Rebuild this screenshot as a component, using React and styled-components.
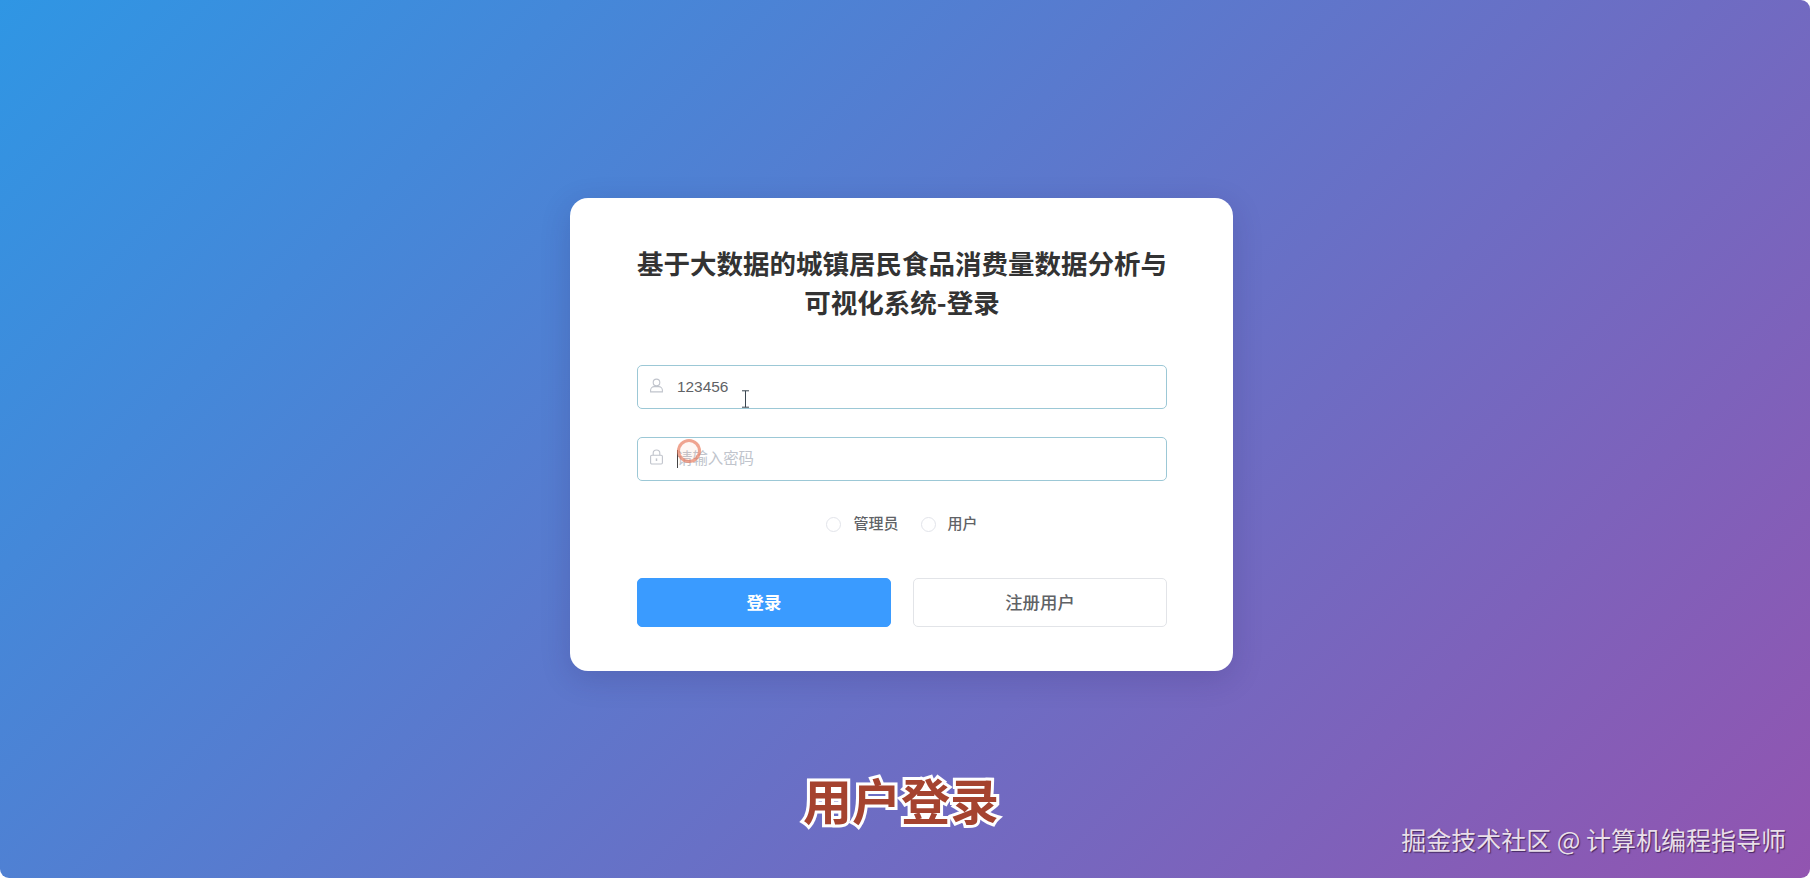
import React from "react";
import styled, { createGlobalStyle } from "styled-components";

const GlobalStyle = createGlobalStyle`
  html, body, #root {
    margin: 0;
    height: 100%;
    background: #fff;
  }
  body {
    font-family: "Liberation Sans", "Noto Sans CJK SC", sans-serif;
    overflow: hidden;
  }
`;

const UserIcon = () => (
  <svg width="15" height="15" viewBox="0 0 15 15" fill="none" stroke="#c0c4cc" strokeWidth="1.1">
    <circle cx="7.5" cy="4.4" r="3.3" />
    <path d="M1.6 13.9v-1.6c0-2.4 1.9-3.7 3.6-3.7h4.6c1.7 0 3.6 1.3 3.6 3.7v1.6z" />
  </svg>
);

const LockIcon = () => (
  <svg width="15" height="16" viewBox="0 0 15 16" fill="none" stroke="#c0c4cc" strokeWidth="1.1">
    <rect x="1.6" y="6.2" width="11.8" height="8.8" rx="1.2" />
    <path d="M4.2 6.2V4.1C4.2 2.3 5.7 1 7.5 1s3.3 1.3 3.3 3.1v2.1" />
    <path d="M7.5 9.4v2.6" strokeWidth="1.5" />
  </svg>
);

const IBeam = () => (
  <svg width="9" height="18" viewBox="0 0 9 18" fill="none" stroke="#3b4650" strokeWidth="1">
    <path d="M1 .8h7M1 17.2h7M4.5 .8v16.4" />
  </svg>
);

const App = () => {
  return (
    <Page>
      <GlobalStyle />
      <Card>
        <Title>基于大数据的城镇居民食品消费量数据分析与可视化系统-登录</Title>
        <Field>
          <FieldIcon $top={13}>
            <UserIcon />
          </FieldIcon>
          <TextInput type="text" value="123456" readOnly />
          <Pointer>
            <IBeam />
          </Pointer>
        </Field>
        <Field $gap>
          <FieldIcon $top={12}>
            <LockIcon />
          </FieldIcon>
          <TextInput type="password" placeholder="请输入密码" readOnly />
          <Caret />
          <ClickRing />
        </Field>
        <RadioGroup>
          <RadioItem>
            <RadioDot />
            管理员
          </RadioItem>
          <RadioItem>
            <RadioDot />
            用户
          </RadioItem>
        </RadioGroup>
        <Buttons>
          <Button $primary>登录</Button>
          <Button>注册用户</Button>
        </Buttons>
      </Card>
      <Caption>用户登录</Caption>
      <Watermark>掘金技术社区 @ 计算机编程指导师</Watermark>
    </Page>
  );
};

export default App;

const Page = styled.div`
  position: relative;
  box-sizing: border-box;
  height: 878px;
  display: flex;
  align-items: center;
  justify-content: center;
  padding: 0 7px 9px 0;
  background: linear-gradient(135deg, #2f96e4, #9254b0);
  border-radius: 0 9px 9px 9px;
  overflow: hidden;
`;

const Card = styled.div`
  box-sizing: border-box;
  width: 663px;
  height: 473px;
  padding: 45px 66px 44px 67px;
  background: #fff;
  border-radius: 18px;
  box-shadow: 0 8px 30px rgba(40, 30, 90, 0.18);
`;

const Title = styled.h1`
  margin: 0 -4px 44px;
  font-family: "Noto Sans CJK SC", sans-serif;
  font-size: 26.5px;
  line-height: 39px;
  font-weight: 700;
  color: #333;
  text-align: center;
`;

const Field = styled.div`
  position: relative;
  height: 44px;
  margin-top: ${({ $gap }) => ($gap ? "28px" : "0")};
`;

const FieldIcon = styled.span`
  position: absolute;
  left: 12px;
  top: ${({ $top }) => $top}px;
  display: flex;
`;

const TextInput = styled.input`
  box-sizing: border-box;
  width: 100%;
  height: 100%;
  padding: 0 15px 0 39px;
  border: 1px solid #9cc8d6;
  border-radius: 5px;
  outline: none;
  background: #fff;
  font-family: "Liberation Sans", "Noto Sans CJK SC", sans-serif;
  font-size: 15.4px;
  color: #606266;
  &::placeholder {
    color: #c0c4cc;
    opacity: 1;
  }
`;

const Pointer = styled.span`
  position: absolute;
  left: 104px;
  top: 25px;
  display: flex;
`;

const Caret = styled.span`
  position: absolute;
  left: 40px;
  top: 13px;
  width: 1px;
  height: 18px;
  background: #444;
`;

const ClickRing = styled.span`
  position: absolute;
  left: 40px;
  top: 2px;
  width: 24px;
  height: 24px;
  box-sizing: border-box;
  border: 3px solid rgba(232, 120, 90, 0.65);
  border-radius: 50%;
  background: rgba(240, 150, 120, 0.08);
`;

const RadioGroup = styled.div`
  display: flex;
  justify-content: center;
  gap: 22px;
  margin-top: 32px;
  height: 20px;
`;

const RadioItem = styled.label`
  display: flex;
  align-items: center;
  gap: 12px;
  font-family: "Noto Sans CJK SC", sans-serif;
  font-size: 15px;
  font-weight: 500;
  line-height: 20px;
  color: #606266;
`;

const RadioDot = styled.span`
  box-sizing: border-box;
  width: 15px;
  height: 15px;
  margin-top: 3px;
  border: 1px solid #e2e4ea;
  border-radius: 50%;
  background: #fff;
`;

const Buttons = styled.div`
  display: grid;
  grid-template-columns: 254px 254px;
  justify-content: space-between;
  margin-top: 45px;
`;

const Button = styled.button`
  height: 49px;
  padding: 0 0 3px;
  border: 1px solid ${({ $primary }) => ($primary ? "#3a9bff" : "#e2e4e8")};
  border-radius: 5px;
  background: ${({ $primary }) => ($primary ? "#3a9bff" : "#fff")};
  color: ${({ $primary }) => ($primary ? "#fff" : "#606266")};
  font-family: "Noto Sans CJK SC", sans-serif;
  font-size: 17.4px;
  font-weight: ${({ $primary }) => ($primary ? 700 : 500)};
`;

const Caption = styled.div`
  position: absolute;
  left: 803px;
  top: 767px;
  font-family: "Noto Sans CJK SC", sans-serif;
  font-size: 49px;
  font-weight: 700;
  line-height: 64px;
  color: #a5432f;
  -webkit-text-stroke: 6px #fff;
  paint-order: stroke fill;
`;

const Watermark = styled.div`
  position: absolute;
  right: 24px;
  top: 822px;
  font-family: "Noto Sans CJK SC", sans-serif;
  font-size: 25px;
  font-weight: 400;
  line-height: 34px;
  white-space: nowrap;
  color: #e9dfe9;
  text-shadow: 1px 1px 1px rgba(40, 20, 60, 0.7);
`;
